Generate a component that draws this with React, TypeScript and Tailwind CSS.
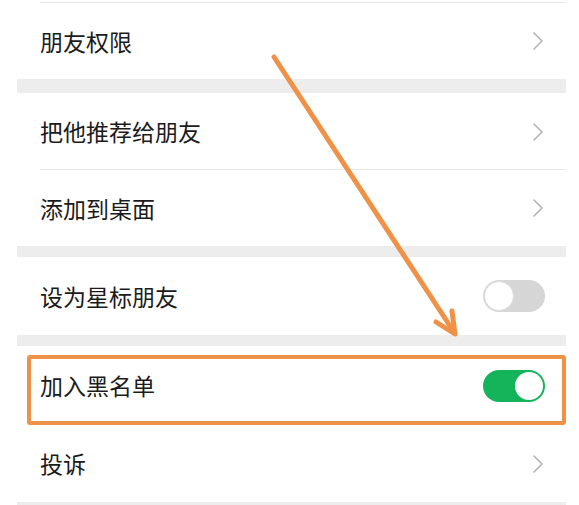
import React from "react";

const font = { fontFamily: '"Noto Sans CJK SC", "Noto Sans", sans-serif' };

const Chevron = () => (
  <svg width="12" height="20" viewBox="0 0 12 20" className="shrink-0 mr-[1px]">
    <path d="M2 2 L10 10 L2 18" fill="none" stroke="#b3b3b3" strokeWidth="1.6" strokeLinecap="round" strokeLinejoin="round" />
  </svg>
);

const Toggle = ({ on }: { on: boolean }) =>
  on ? (
    <div className="w-[62px] h-[32px] rounded-full bg-[#15b45a] flex items-center justify-end pr-[2px]">
      <div className="w-[28px] h-[28px] rounded-full bg-white" />
    </div>
  ) : (
    <div className="w-[62px] h-[32px] rounded-full bg-[#d6d6d6] flex items-center pl-[1px]">
      <div className="w-[30px] h-[30px] rounded-full bg-white border border-[#dcdcdc]" />
    </div>
  );

const Row = ({
  label,
  right,
  h = "h-[76px]",
  divider = false,
}: {
  label: string;
  right: React.ReactNode;
  h?: string;
  divider?: boolean;
}) => (
  <div className={`relative flex items-center justify-between pl-[23px] pr-[21px] ${h}`}>
    <span className="text-[23px] text-[#1b1b1b] leading-none">{label}</span>
    {right}
    {divider && <div className="absolute left-[23px] right-0 bottom-0 h-px bg-[#e8e8e8]" />}
  </div>
);

const Gap = ({ h }: { h: string }) => <div className={`bg-[#ededed] ${h}`} />;

export default function App() {
  return (
    <div className="relative w-[579px] h-[505px] bg-white overflow-hidden" style={font}>
      <div className="ml-[17px] w-[549px] flex flex-col">
        <div className="h-[3px] ml-[23px] border-b border-[#e8e8e8]" />
        <Row label="朋友权限" right={<Chevron />} h="h-[76px]" />
        <Gap h="h-[14px]" />
        <Row label="把他推荐给朋友" right={<Chevron />} h="h-[77px]" divider />
        <Row label="添加到桌面" right={<Chevron />} h="h-[76px]" />
        <Gap h="h-[11px]" />
        <Row label="设为星标朋友" right={<Toggle on={false} />} h="h-[78px]" />
        <Gap h="h-[11px]" />
        <Row label="加入黑名单" right={<Toggle on />} h="h-[79px]" />
        <Row label="投诉" right={<Chevron />} h="h-[77px]" />
        <Gap h="h-[10px]" />
      </div>

      {/* highlight box */}
      <div className="absolute left-[27px] top-[355px] w-[539px] h-[70px] border-[4px] border-[#ef9146] rounded-[3px]" />

      {/* arrow */}
      <svg className="absolute left-0 top-0" width="579" height="505" viewBox="0 0 579 505">
        <g stroke="#ef9146" strokeWidth="5" strokeLinecap="round" strokeLinejoin="round" fill="none">
          <line x1="274" y1="57" x2="454" y2="332" />
          <polyline points="452,311 455,334 436,322" />
        </g>
      </svg>
    </div>
  );
}
